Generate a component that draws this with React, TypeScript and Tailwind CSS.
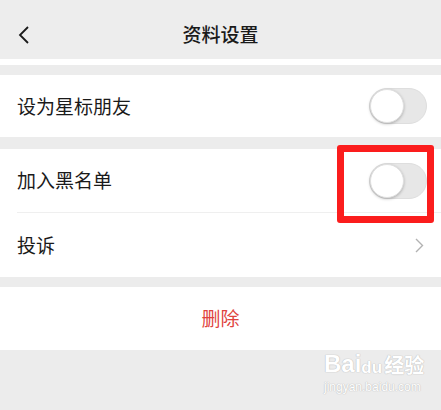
import React from "react";

const font = { fontFamily: '"Noto Sans CJK SC", "Noto Sans", sans-serif' };

function Toggle() {
  return (
    <div className="relative w-[58px] h-[36px] rounded-full bg-[#e7e7e7] border border-[#dedede]">
      <div className="absolute left-0 top-[0px] w-[34px] h-[34px] rounded-full bg-white shadow-[0_1px_3px_rgba(0,0,0,0.25)] border border-[#e0e0e0]" />
    </div>
  );
}

export default function App() {
  return (
    <div className="relative w-[441px] h-[410px] bg-[#ececec] overflow-hidden" style={font}>
      {/* header */}
      <div className="relative h-[59px] bg-[#ededed] flex items-center justify-center">
        <svg className="absolute left-[17px] top-[26px]" width="13" height="18" viewBox="0 0 13 18">
          <path d="M11 1 L3 9 L11 17" fill="none" stroke="#1a1a1a" strokeWidth="1.8" />
        </svg>
        <span className="text-[19px] font-medium text-[#1a1a1a] mt-[10px]">资料设置</span>
      </div>
      <div className="h-[6px] bg-white" />
      <div className="h-[10px]" />
      <div className="h-[62px] bg-white flex items-center justify-between pl-[17px] pr-[14px]">
        <span className="text-[19px] text-[#1a1a1a]">设为星标朋友</span>
        <Toggle />
      </div>
      <div className="h-[12px]" />
      <div className="bg-white">
        <div className="h-[63px] flex items-center justify-between pl-[17px] pr-[14px]">
          <span className="text-[19px] text-[#1a1a1a]">加入黑名单</span>
          <Toggle />
        </div>
        <div className="ml-[17px] h-px bg-[#efefef]" />
        <div className="h-[64px] flex items-center justify-between pl-[17px] pr-[17px]">
          <span className="text-[19px] text-[#1a1a1a]">投诉</span>
          <svg width="9" height="15" viewBox="0 0 9 15">
            <path d="M1 1 L7.5 7.5 L1 14" fill="none" stroke="#b2b2b2" strokeWidth="1.4" />
          </svg>
        </div>
      </div>
      <div className="h-[10px]" />
      <div className="h-[63px] bg-white flex items-center justify-center">
        <span className="text-[19px] text-[#e0433e]">删除</span>
      </div>

      {/* red annotation box */}
      <div className="absolute left-[337px] top-[145px] w-[97px] h-[78px] border-[7px] border-[#fb1d1d] rounded-[3px]" />

      {/* watermark */}
      <div className="absolute left-[324px] top-[352px] flex flex-col items-start">
        <div className="flex items-end text-white text-[24px] font-bold leading-none [text-shadow:0_0_1px_#bbb,0_0_1px_#bbb]" style={{ fontFamily: '"Liberation Sans", "Noto Sans CJK SC", sans-serif' }}>
          <span>Bai</span>
          <span className="text-[17px]">du</span>
          <span className="text-[20px] ml-[2px]">经验</span>
        </div>
        <span className="text-white text-[12px] leading-none mt-[5px] [text-shadow:0_0_1px_#bbb,0_0_1px_#bbb]" style={{ fontFamily: '"Liberation Sans", sans-serif' }}>jingyan.baidu.com</span>
      </div>
    </div>
  );
}
